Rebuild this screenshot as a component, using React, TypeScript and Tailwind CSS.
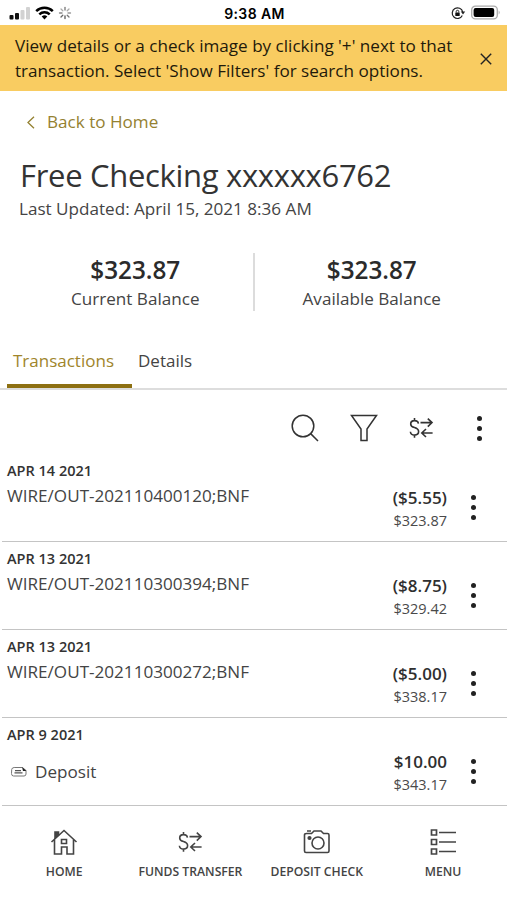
import React from "react";

function TransferIcon() {
  return (
    <svg width="26" height="22" viewBox="0 0 26 22" fill="none" stroke="currentColor" strokeWidth="1.6">
      <path d="M10.4 6.600C10.200 4.700 8.800 3.600 6.500 3.600C4.200 3.600 2.700 4.800 2.700 6.900C2.700 9 4.200 9.900 6.500 10.600C9 11.400 10.600 12.400 10.600 14.600C10.600 16.900 8.900 18.100 6.500 18.100C4 18.100 2.600 16.900 2.400 14.700M6.500 1V3.800M6.500 18V20.800" />
      <path d="M12.500 5.600H24M19.800 1.600L24 5.600L19.800 9.600M24.600 16H13.800M18 12L13.800 16L18 20" />
    </svg>
  );
}

function Dots() {
  return (
    <div className="flex flex-col items-center gap-[5px] text-[#222]">
      <i className="size-[5px] rounded-full bg-current" />
      <i className="size-[5px] rounded-full bg-current" />
      <i className="size-[5px] rounded-full bg-current" />
    </div>
  );
}

function StatusBar() {
  return (
    <header className="flex h-[25px] items-center text-black">
      <div className="flex flex-1 items-center pl-[9px]">
        <svg width="64" height="16" viewBox="0 0 64 16" className="mt-px">
          <rect x="0.5" y="10" width="4" height="4.5" rx="1" fill="#111" />
          <rect x="6" y="8" width="4" height="6.5" rx="1" fill="#111" />
          <rect x="11.5" y="5" width="4" height="9.5" rx="1" fill="#d2d2d2" />
          <rect x="17" y="2" width="4" height="12.500" rx="1" fill="#d2d2d2" />
          <g fill="none" stroke="#000" strokeWidth="2.500">
            <path d="M27.200 6.200a12 12 0 0 1 16.600 0" />
            <path d="M30.300 9.300a7.500 7.500 0 0 1 10.400 0" />
          </g>
          <path d="M35.500 14.500l-2.800-2.900a4 4 0 0 1 5.600 0z" fill="#000" />
          <g strokeWidth="1.300" strokeLinecap="round">
            <path d="M56 5V2.500" stroke="#777" />
            <path d="M58.200 5.800l1.800-1.800" stroke="#aaa" />
            <path d="M59 8h2.500" stroke="#999" />
            <path d="M58.200 10.200l1.800 1.800" stroke="#777" />
            <path d="M56 11v2.500" stroke="#555" />
            <path d="M53.800 10.200L52 12" stroke="#666" />
            <path d="M53 8h-2.500" stroke="#888" />
            <path d="M53.800 5.800L52 4" stroke="#aaa" />
          </g>
        </svg>
      </div>
      <span className="pt-[3px] pr-px font-['Inter',sans-serif] text-[14px] font-semibold leading-5 tracking-[0.4px]">9:38 AM</span>
      <div className="flex flex-1 justify-end pr-[6px]">
        <svg width="50" height="16" viewBox="0 0 50 16" className="mt-px">
          <path d="M11.300 10.500A5.300 5.300 0 1 1 11.700 7" fill="none" stroke="#222" strokeWidth="1.200" />
          <path d="M9.800 6.600h4.400l-2.200 2.800z" fill="#222" />
          <rect x="4.300" y="7.500" width="4.400" height="3.500" rx=".5" fill="#111" />
          <path d="M5.200 7.500V6.600a1.300 1.300 0 0 1 2.600 0v.9" fill="none" stroke="#111" strokeWidth=".9" />
          <rect x="20.700" y="1.200" width="25.600" height="12.600" rx="3.600" fill="#fff" stroke="#aaa" strokeWidth="1.300" />
          <rect x="22.600" y="3" width="20.600" height="9" rx="2" fill="#000" />
          <path d="M47.700 5.500q2 2 0 4z" fill="#aaa" />
        </svg>
      </div>
    </header>
  );
}

function Balance({ label }: { label: string }) {
  return (
    <div className="flex flex-1 flex-col items-center">
      <strong className="pt-px text-[24.300px] font-semibold leading-8 text-[#2b2b2b]">$323.87</strong>
      <span className="-mt-px whitespace-nowrap text-[17.100px] leading-7 text-[#444]">{label}</span>
    </div>
  );
}

interface Row {
  date: string;
  text: string;
  amount: string;
  balance: string;
  deposit?: boolean;
}

const rows: Row[] = [
  { date: "APR 14 2021", text: "WIRE/OUT-202110400120;BNF", amount: "($5.55)", balance: "$323.87" },
  { date: "APR 13 2021", text: "WIRE/OUT-202110300394;BNF", amount: "($8.75)", balance: "$329.42" },
  { date: "APR 13 2021", text: "WIRE/OUT-202110300272;BNF", amount: "($5.00)", balance: "$338.17" },
  { date: "APR 9 2021", text: "Deposit", amount: "$10.00", balance: "$343.17", deposit: true },
];

function Transaction({ row }: { row: Row }) {
  return (
    <li className="ml-[2px] flex h-[88px] border-b border-[#c4c4c4] pl-[5px]">
      <div className="flex-1 pt-[7px]">
        <div className="text-[14.500px] font-semibold leading-5 text-[#333]">{row.date}</div>
        {row.deposit ? (
          <div className="mt-[15px] flex items-center text-[17.100px] leading-6 text-[#444]">
            <svg width="18" height="12" viewBox="0 0 18 12" className="ml-[3px] mr-[7px]" fill="none" stroke="#555">
              <path d="M12.500 1.500H4.200Q2 1.500 1.700 3.500L1.500 7.500Q1.500 10 3.500 10H14Q16 10 16 8V4.500Z" stroke="#777" />
              <path d="M5 4.700h6M4.500 6.800h8" strokeWidth="1.200" />
              <path d="M12 1L16.500 5H13Z" fill="#222" stroke="none" />
            </svg>
            {row.text}
          </div>
        ) : (
          <div className="mt-[3px] whitespace-nowrap text-[17.100px] leading-6 text-[#444]">{row.text}</div>
        )}
      </div>
      <div className="flex flex-col items-end pt-[32px]">
        <span className="text-[17px] font-semibold leading-6 text-[#2f2f2f]">{row.amount}</span>
        <span className="text-[14.500px] leading-[22px] text-[#4a4a4a]">{row.balance}</span>
      </div>
      <div className="mr-[31px] flex w-[29px] justify-end pt-[41px]">
        <Dots />
      </div>
    </li>
  );
}

function NavItem({ label, children }: { label: string; children: React.ReactNode }) {
  return (
    <div className="flex w-[126.300px] flex-col items-center text-[#444]">
      <div className="flex h-[30px] items-center justify-center">{children}</div>
      <span className="mt-[5px] whitespace-nowrap text-[12.200px] font-semibold leading-5">{label}</span>
    </div>
  );
}

export default function App() {
  return (
    <main className="h-[900px] w-[507px] overflow-hidden bg-white font-['Open_Sans',sans-serif] text-[#333]">
      <StatusBar />
      <section className="flex h-[66px] items-center bg-[#f9cc61] pl-[15px] pr-[15px] text-[#1f1a0b]">
        <p className="flex-1 whitespace-nowrap text-[17.100px] leading-[25px]">
          View details or a check image by clicking '+' next to that
          <br />
          transaction. Select 'Show Filters' for search options.
        </p>
        <svg width="12" height="12" viewBox="0 0 12 12" stroke="#222" strokeWidth="1.400" className="mt-[2px]">
          <path d="M.8.8l10.400 10.400M11.200.8L.8 11.200" />
        </svg>
      </section>
      <a className="mt-[19px] flex h-6 items-center pl-[27px] text-[17.100px] text-[#948131]">
        <svg width="8" height="13" viewBox="0 0 8 13" fill="none" stroke="currentColor" strokeWidth="1.300" className="mr-[12px]">
          <path d="M7 .8L1 6.500L7 12.200" />
        </svg>
        Back to Home
      </a>
      <h1 className="mt-[21px] whitespace-nowrap pl-[20px] text-[31px] leading-10 tracking-[-0.310px]">Free Checking xxxxxx6762</h1>
      <p className="mt-[2px] pl-[19px] text-[17.100px] leading-6 text-[#444]">Last Updated: April 15, 2021 8:36 AM</p>
      <section className="mx-[18px] mt-[32px] flex h-[58px]">
        <Balance label="Current Balance" />
        <div className="w-[2px] bg-[#dcdcdc]" />
        <Balance label="Available Balance" />
      </section>
      <nav className="mt-[29px] flex h-[50px] border-b-2 border-[#ddd] pl-[7px] text-[17px] leading-[41px]">
        <span className="-mb-px h-[48px] w-[125px] border-b-4 border-[#8d7012] pl-[6px] text-[#a0852b]">Transactions</span>
        <span className="pl-[6px] text-[#444]">Details</span>
      </nav>
      <div className="flex h-[64px] items-center justify-end pb-px pr-[25px] pt-[13px] text-[#333]">
        <svg width="28" height="28" viewBox="0 0 28 28" fill="none" stroke="currentColor" strokeWidth="1.500">
          <circle cx="12" cy="12" r="10.800" />
          <path d="M19.600 19.600L27 27" />
        </svg>
        <svg width="28" height="28" viewBox="0 0 28 28" fill="none" stroke="currentColor" strokeWidth="1.500" className="ml-[31px]">
          <path d="M1.500 1.500H26.500L17 15V26.500H11V15Z" />
        </svg>
        <div className="ml-[30px]"><TransferIcon /></div>
        <div className="ml-[43px]"><Dots /></div>
      </div>
      <ul>
        {rows.map((row, i) => <Transaction key={i} row={row} />)}
      </ul>
      <footer className="flex pl-px pt-[21px]">
        <NavItem label="HOME">
          <svg width="28" height="28" viewBox="0 0 28 28" fill="none" stroke="currentColor" strokeWidth="1.600">
            <path d="M1.500 14L14 2.500L26.500 14M4.500 11.500V26H11.500V19H17V26H23.500V11.500M11.500 11.500h5v4h-5z" />
            <path d="M5 10V4H8.500V7Z" fill="currentColor" />
          </svg>
        </NavItem>
        <NavItem label="FUNDS TRANSFER"><TransferIcon /></NavItem>
        <NavItem label="DEPOSIT CHECK">
          <svg width="28" height="28" viewBox="0 0 28 28" fill="none" stroke="currentColor" strokeWidth="1.600">
            <path d="M3.500 5.500H8.500L11 3H18L20.500 5.500H24.500Q26 5.500 26 7V23Q26 24.500 24.500 24.500H3Q1.500 24.500 1.500 23V7Q1.500 5.500 3.500 5.500ZM4 3H8" />
            <circle cx="15" cy="15" r="6" />
            <circle cx="6.500" cy="10" r="1.300" fill="currentColor" />
          </svg>
        </NavItem>
        <NavItem label="MENU">
          <svg width="28" height="28" viewBox="0 0 28 28" fill="none" stroke="currentColor" strokeWidth="1.700">
            <path d="M2.500 2h5v5h-5zM2.500 11.500h5v5h-5zM2.500 21h5v5h-5zM10 4.500H27M10 14H27M10 23.500H27" />
          </svg>
        </NavItem>
      </footer>
    </main>
  );
}
